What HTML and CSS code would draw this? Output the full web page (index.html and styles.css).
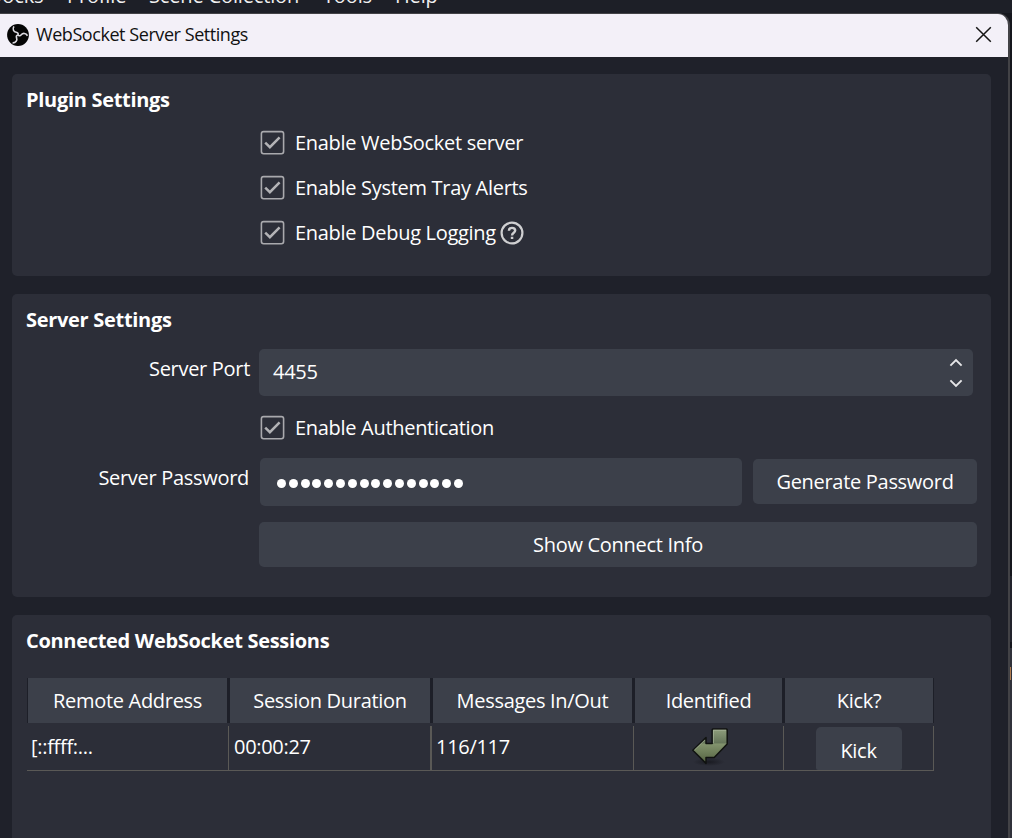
FILE: index.html
```html
<!DOCTYPE html>
<html lang="en">
<head>
  <meta charset="UTF-8" />
  <meta name="viewport" content="width=device-width, initial-scale=1.0"/>
  <title>WebSocket Server Settings</title>
  <link rel="stylesheet" href="styles.css">
</head>
<body>

  <!-- shared icons -->
  <svg class="defs" width="0" height="0">
    <symbol id="check" viewBox="0 0 25 25">
      <rect x="1.4" y="1.6" width="22.2" height="22.2" rx="2.2" fill="none" stroke="#a9a9ad" stroke-width="1.6"/>
      <path d="M5.2 12.6 9.9 17.2 19.6 7.4" fill="none" stroke="#b2b2b5" stroke-width="2.5"/>
    </symbol>
  </svg>

  <nav class="menu">
    <span class="docks">Docks</span>
    <span class="profile">Profile</span>
    <span class="scene">Scene Collection</span>
    <span class="tools">Tools</span>
    <span class="help">Help</span>
  </nav>

  <div class="desktop">
    <div class="window">
      <header class="titlebar">
        <svg class="logo" width="22" height="22" viewBox="0 0 22 22">
          <circle cx="11" cy="11" r="10.9" fill="#050505"/>
          <g fill="none" stroke="#dddbe1" stroke-width="1.6">
            <path d="M6.9 2.4C5.2 5.2 6.6 7.9 9.2 8.3 10.8 8.6 11.6 9.6 11 11"/>
            <path d="M6.9 2.4C5.2 5.2 6.6 7.9 9.2 8.3 10.8 8.6 11.6 9.6 11 11" transform="rotate(120 11 11)"/>
            <path d="M6.9 2.4C5.2 5.2 6.6 7.9 9.2 8.3 10.8 8.6 11.6 9.6 11 11" transform="rotate(240 11 11)"/>
          </g>
        </svg>
        <span class="title">WebSocket Server Settings</span>
        <svg class="close" width="17" height="17" viewBox="0 0 17 17">
          <path d="M1.2 1.2 15.8 15.8M15.8 1.2 1.2 15.8" stroke="#151515" stroke-width="1.5"/>
        </svg>
      </header>

      <main class="content">
        <section class="panel plugin">
          <h2>Plugin Settings</h2>
          <label class="option"><svg><use href="#check"/></svg><span>Enable WebSocket server</span></label>
          <label class="option"><svg><use href="#check"/></svg><span>Enable System Tray Alerts</span></label>
          <label class="option"><svg><use href="#check"/></svg><span>Enable Debug Logging</span>
            <svg class="hint" viewBox="0 0 24 24">
              <circle cx="12" cy="12" r="10.4" fill="none" stroke="#cfcfd1" stroke-width="2.2"/>
              <path d="M8.9 9.7C8.9 7.8 10.2 6.9 12 6.9S15.2 8 15.2 9.6C15.2 11.7 12 11.7 12 14.4" fill="none" stroke="#cfcfd1" stroke-width="2.4"/>
              <path d="M10.8 15.8h2.5v2.3h-2.5z" fill="#cfcfd1"/>
            </svg>
          </label>
        </section>

        <section class="panel server">
          <h2>Server Settings</h2>
          <div class="row port-row">
            <span class="name">Server Port</span>
            <div class="field port">
              <span>4455</span>
              <svg width="14" height="30" viewBox="0 0 14 30">
                <path d="M1.4 7.6 7 2 12.6 7.6M1.4 22.4 7 28 12.6 22.4" fill="none" stroke="#e6e6e8" stroke-width="1.9"/>
              </svg>
            </div>
          </div>
          <label class="option"><svg><use href="#check"/></svg><span>Enable Authentication</span></label>
          <div class="row password-row">
            <span class="name">Server Password</span>
            <div class="field password">
              <i></i><i></i><i></i><i></i><i></i><i></i><i></i><i></i><i></i><i></i><i></i><i></i><i></i><i></i><i></i><i></i>
            </div>
            <button class="btn generate">Generate Password</button>
          </div>
          <button class="btn connect">Show Connect Info</button>
        </section>

        <section class="panel sessions">
          <h2>Connected WebSocket Sessions</h2>
          <div class="table head">
            <span>Remote Address</span>
            <span>Session Duration</span>
            <span>Messages In/Out</span>
            <span>Identified</span>
            <span>Kick?</span>
          </div>
          <div class="table body">
            <span>[::ffff:...</span>
            <span>00:00:27</span>
            <span>116/117</span>
            <span class="center">
              <svg class="arrow" width="38" height="40" viewBox="0 0 38 40">
                <defs>
                  <linearGradient id="green" x1="0" y1="0" x2="0" y2="1">
                    <stop offset="0" stop-color="#8f9f7c"/>
                    <stop offset="0.4" stop-color="#66765a"/>
                    <stop offset="0.44" stop-color="#82936d"/>
                    <stop offset="1" stop-color="#52613f"/>
                  </linearGradient>
                  <radialGradient id="shade">
                    <stop offset="0" stop-color="#15161c" stop-opacity="0.8"/>
                    <stop offset="1" stop-color="#15161c" stop-opacity="0"/>
                  </radialGradient>
                </defs>
                <ellipse cx="18" cy="35" rx="16" ry="4" fill="url(#shade)"/>
                <path d="M21.2 2.8Q21.2 2 22 2H35.4Q36.2 2 36.2 2.8V17L23.2 30.6H15V36.4L1.8 23.2 15 10.6V16.6H21.2Z" fill="url(#green)" stroke="#101210" stroke-width="1.5" stroke-linejoin="round"/>
                <path d="M22.4 16V3.2H35M13.9 13 3.4 23" fill="none" stroke="#b3bfa4" stroke-width="0.9" opacity="0.7"/>
              </svg>
            </span>
            <span class="center"><button class="btn kick">Kick</button></span>
          </div>
        </section>
      </main>
    </div>
    <div class="behind"><i></i></div>
  </div>

</body>
</html>
```
FILE: styles.css
```css
* {
  box-sizing: border-box;
}
body {
  font-family: "Open Sans", sans-serif;
  font-size: 20px;
  line-height: 28px;
  letter-spacing: -0.3px;
  margin: 0;
  height: 838px;
  overflow: hidden;
  background: #1d1f27;
  color: #fff;
}
.defs {
  display: block;
}
svg {
  flex: none;
}

/* menu bar of the main window, mostly hidden */
.menu {
  display: flex;
  height: 13px;
  overflow: hidden;
  color: #f0f0f0;
  letter-spacing: -0.15px;
  white-space: nowrap;
}
.menu span {
  margin-top: -18px;
}
.docks {
  width: 79px;
  margin-left: -12px;
}
.profile {
  width: 82px;
}
.scene {
  width: 174px;
}
.tools {
  width: 72px;
}

.desktop {
  display: flex;
  height: 825px;
  background: #15161d;
}
.window {
  width: 1010px;
  border-top: 1px solid #424246;
  border-right: 2px solid #424246;
  border-top-right-radius: 12px;
  overflow: hidden;
  background: #1f212a;
}
.behind {
  width: 2px;
  padding-top: 654px;
  background: linear-gradient(#15161d 563px, #22232c 563px, #22232c 629px, #15161d 629px, #15161d 635px, #30313a 635px);
}
.behind i {
  display: block;
  width: 1px;
  height: 13px;
  background: #b07c50;
}
.titlebar {
  display: flex;
  align-items: center;
  height: 43px;
  padding: 0 16px 2px 7px;
  background: #f3f0f8;
  color: #111;
}
.title {
  flex: 1;
  margin: -1px 0 0 7px;
  font-size: 18px;
  letter-spacing: -0.44px;
}
.content {
  padding: 17px 17px 0 12px;
}

.panel {
  margin-bottom: 18px;
  padding: 12px 14px 0 15px;
  border-radius: 5px;
  background: #2c2e38;
}
.plugin {
  height: 202px;
}
.server {
  height: 303px;
}
.sessions {
  height: 260px;
}
h2 {
  margin: 0 0 6px -1px;
  font-size: 20px;
  line-height: 28px;
}
.option {
  display: flex;
  align-items: center;
  height: 45px;
  margin-left: 233px;
}
.option svg {
  width: 25px;
  height: 25px;
  margin-right: 10px;
}
.option .hint {
  width: 24px;
  height: 24px;
  margin-left: 4px;
}

.row {
  display: flex;
  margin-bottom: 9px;
}
.name {
  width: 222px;
  margin-top: 6px;
  text-align: right;
}
.field {
  display: flex;
  align-items: center;
  border-radius: 5px;
  background: #3c404a;
}
.server h2 {
  margin-bottom: 0;
}
.port-row {
  margin-top: 15px;
}
.port-row .name {
  width: 223px;
}
.port {
  width: 714px;
  height: 47px;
  margin-left: 9px;
  padding: 0 10px 2px 14px;
  justify-content: space-between;
}
.port svg {
  margin-top: 2px;
}
.password-row {
  margin-top: 8px;
}
.password {
  width: 482px;
  height: 48px;
  margin-left: 11px;
  padding: 2px 0 0 17px;
  gap: 2.8px;
}
.password i {
  width: 9px;
  height: 9px;
  border-radius: 50%;
  background: #fff;
}
.btn {
  padding: 0;
  border: none;
  border-radius: 5px;
  background: #3c404a;
  color: #fff;
  font: inherit;
  letter-spacing: inherit;
}
.generate {
  width: 224px;
  height: 45px;
  margin: 1px 0 0 11px;
}
.connect {
  display: block;
  width: 718px;
  height: 45px;
  margin: 16px 0 0 232px;
}

.table {
  display: grid;
  grid-template-columns: 202px 203px 202px 150px 150px;
  width: 907px;
}
.head {
  height: 45px;
  margin-top: 23px;
}
.head span {
  padding-top: 9px;
  border: solid #1d1f28;
  border-width: 0 2px 0 1px;
  background: #3c404a;
  text-align: center;
}
.head span:last-child {
  border-right-width: 1px;
}
.body {
  height: 45px;
  margin-top: 3px;
  border-bottom: 1px solid #5a5956;
}
.body span {
  padding: 7px 0 0 4px;
  border-right: 1px solid #5a5956;
}
.body span:nth-child(2) {
  padding-left: 5px;
  border-right-width: 2px;
}
.body .center {
  display: flex;
  justify-content: center;
  padding: 1px 0 0 3px;
}
.body .center:last-child {
  padding-left: 0;
}
.kick {
  width: 86px;
  height: 43px;
  padding-top: 4px;
  border-radius: 5px 5px 2px 2px;
}
```
